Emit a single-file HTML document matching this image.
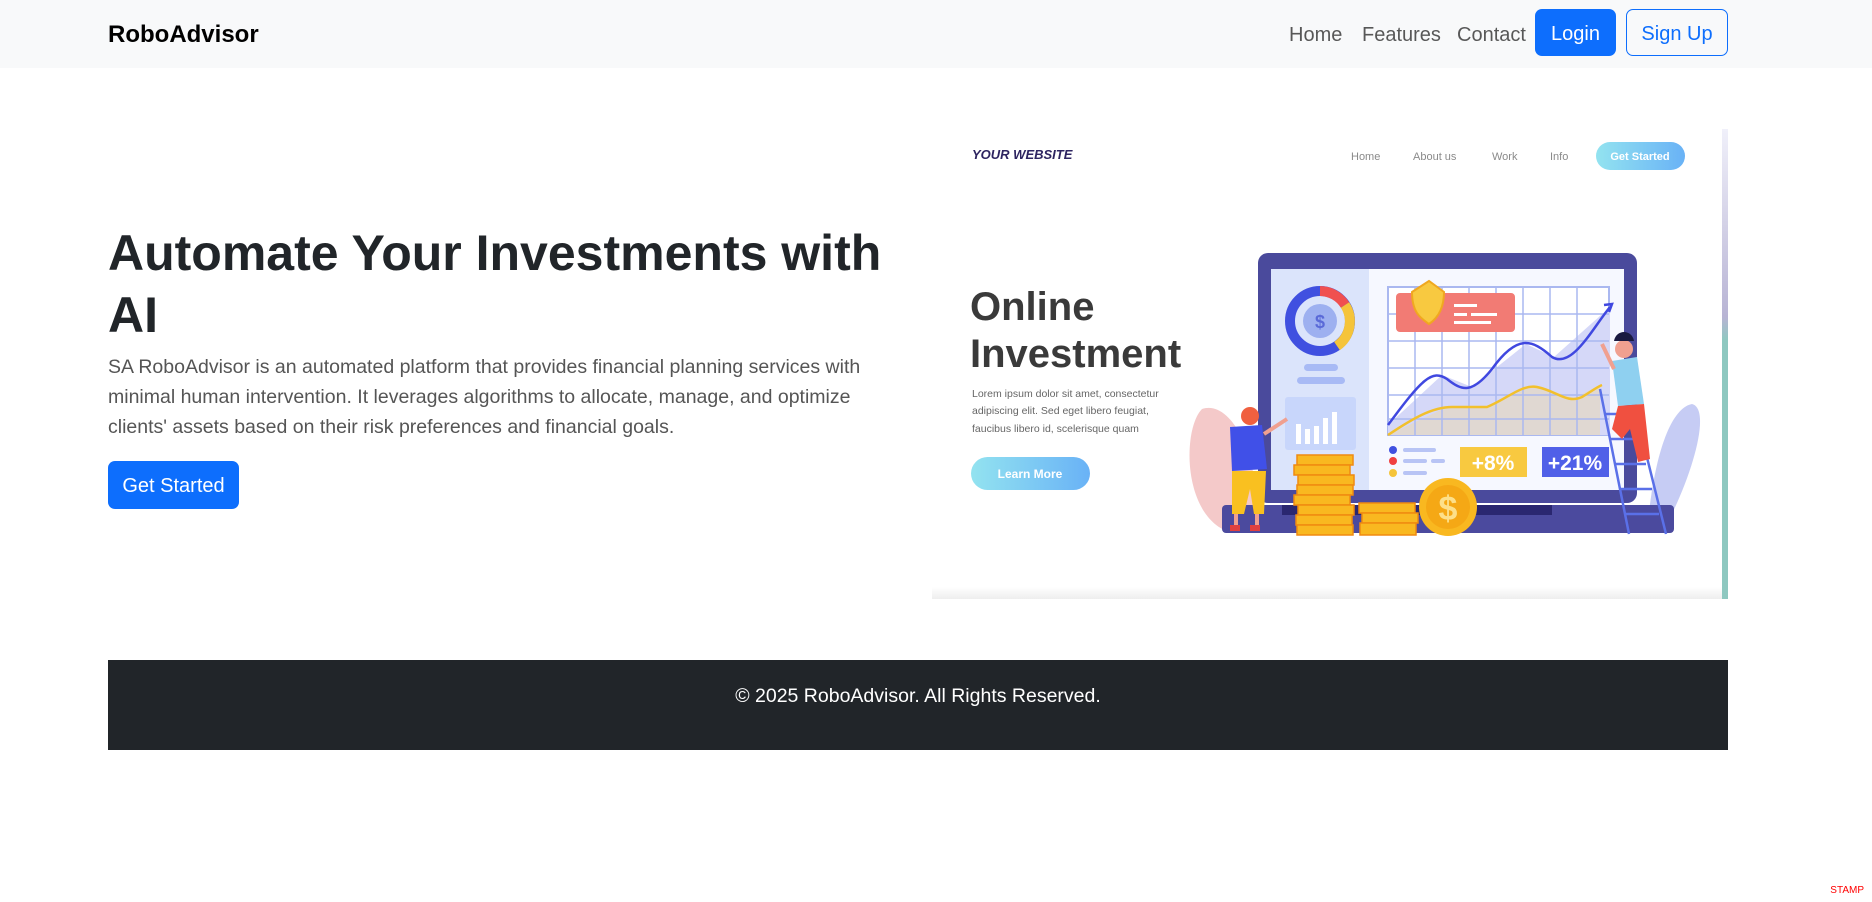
<!DOCTYPE html>
<html><head><meta charset="utf-8"><style>
*{box-sizing:border-box;margin:0;padding:0}
body{width:1872px;height:902px;background:#fff;font-family:"Liberation Sans",sans-serif;position:relative;overflow:hidden;color:#212529}
.nav{position:absolute;left:0;top:0;width:1872px;height:68px;background:#f8f9fa}
.brand{position:absolute;left:108px;top:19px;font-size:24px;font-weight:bold;color:#000;line-height:32px}
.nl{position:absolute;top:21px;font-size:20px;line-height:28px;color:rgba(0,0,0,.65)}
.btn{position:absolute;border-radius:7px;font-size:20px;line-height:28px;text-align:center;padding-top:11px}
h1{position:absolute;left:108px;top:222px;font-size:50px;line-height:62px;font-weight:bold;white-space:nowrap;color:#212529}
.lead{position:absolute;left:108px;top:352px;font-size:19.5px;line-height:30px;color:#555;white-space:nowrap}
.gs{left:108px;top:461px;width:131px;height:48px;background:#0d6efd;color:#fff}
.foot{position:absolute;left:108px;top:660px;width:1620px;height:90px;background:#212529;color:#fff;font-size:19.5px;text-align:center;line-height:72px}
.stamp{position:absolute;right:8px;bottom:6px;font-size:10px;color:red}
</style></head><body>
<div class="nav">
<div class="brand">RoboAdvisor</div>
<div class="nl" style="left:1289px">Home</div>
<div class="nl" style="left:1362px">Features</div>
<div class="nl" style="left:1457px">Contact</div>
<div class="btn" style="left:1535px;top:9px;width:81px;height:47px;background:#0d6efd;color:#fff">Login</div>
<div class="btn" style="left:1626px;top:9px;width:102px;height:47px;border:1px solid #0d6efd;color:#0d6efd;padding-top:10px">Sign Up</div>
</div>
<h1>Automate Your Investments with<br>AI</h1>
<div class="lead">SA RoboAdvisor is an automated platform that provides financial planning services with<br>minimal human intervention. It leverages algorithms to allocate, manage, and optimize<br>clients' assets based on their risk preferences and financial goals.</div>
<div class="btn gs">Get Started</div>

<svg style="position:absolute;left:932px;top:129px" width="796" height="470" viewBox="0 0 796 470" font-family="Liberation Sans, sans-serif">
<defs>
<linearGradient id="bg" x1="0" x2="1"><stop offset="0" stop-color="#93e3f0"/><stop offset="1" stop-color="#69b2f6"/></linearGradient>
<linearGradient id="st" x1="0" y1="0" x2="0" y2="1"><stop offset="0" stop-color="#f0f0fa"/><stop offset=".4" stop-color="#b8b4d4"/><stop offset=".45" stop-color="#8ec8c0"/><stop offset="1" stop-color="#8ec8c0"/></linearGradient>
<linearGradient id="sh" x1="0" y1="0" x2="0" y2="1"><stop offset="0" stop-color="#fff"/><stop offset="1" stop-color="#eeeeee"/></linearGradient>
</defs>
<rect width="796" height="470" fill="#fff"/>
<rect x="790" y="0" width="6" height="470" fill="url(#st)"/>
<rect x="0" y="458" width="790" height="12" fill="url(#sh)"/>
<text x="40" y="30" font-size="13" font-style="italic" font-weight="bold" fill="#2d2460">YOUR WEBSITE</text>
<g font-size="11" fill="#8a8a8a"><text x="419" y="31">Home</text><text x="481" y="31">About us</text><text x="560" y="31">Work</text><text x="618" y="31">Info</text></g>
<rect x="664" y="13" width="89" height="28" rx="14" fill="url(#bg)"/>
<text x="708" y="31" font-size="11" font-weight="bold" fill="#fff" text-anchor="middle">Get Started</text>
<text x="38" y="191" font-size="40" font-weight="bold" fill="#3a3a3a">Online</text>
<text x="38" y="238" font-size="40" font-weight="bold" fill="#3a3a3a">Investment</text>
<g font-size="10.5" fill="#666"><text x="40" y="268">Lorem ipsum dolor sit amet, consectetur</text><text x="40" y="285">adipiscing elit. Sed eget libero feugiat,</text><text x="40" y="303">faucibus libero id, scelerisque quam</text></g>
<rect x="39" y="328" width="119" height="33" rx="16.5" fill="url(#bg)"/>
<text x="98" y="349" font-size="12" font-weight="bold" fill="#fff" text-anchor="middle">Learn More</text>
<path d="M300 404 C250 390 250 300 270 280 C300 270 330 330 325 404Z" fill="#f4c9c9"/>
<path d="M730 404 C760 350 780 280 760 275 C735 280 720 340 715 404Z" fill="#c6ccf4"/>
<rect x="326" y="124" width="379" height="250" rx="10" fill="#4a4a9c"/>
<rect x="339" y="140" width="353" height="221" fill="#f6f8ff"/>
<rect x="339" y="140" width="98" height="221" fill="#dbe4fb"/>
<rect x="290" y="376" width="452" height="28" rx="4" fill="#4b4a9e"/>
<rect x="350" y="376" width="270" height="10" fill="#2a2770"/>
<circle cx="388" cy="192" r="30" fill="none" stroke="#4050e0" stroke-width="10"/>
<path d="M388 162 A30 30 0 0 1 413 176" fill="none" stroke="#f05050" stroke-width="10"/>
<path d="M413 176 A30 30 0 0 1 405 217" fill="none" stroke="#f5c43a" stroke-width="10"/>
<circle cx="388" cy="192" r="17" fill="#9db0f0"/>
<text x="388" y="199" font-size="18" font-weight="bold" fill="#5a6ad8" text-anchor="middle">$</text>
<rect x="372" y="235" width="34" height="7" rx="3.5" fill="#a8baf5"/>
<rect x="365" y="248" width="48" height="7" rx="3.5" fill="#a8baf5"/>
<rect x="353" y="268" width="71" height="53" rx="3" fill="#c8d6fb"/>
<g fill="#fff"><rect x="364" y="295" width="5" height="20"/><rect x="373" y="300" width="5" height="15"/><rect x="382" y="297" width="5" height="18"/><rect x="391" y="289" width="5" height="26"/><rect x="400" y="283" width="5" height="32"/></g>
<rect x="456" y="158" width="221" height="148" fill="#fff" stroke="#aab8f0" stroke-width="2"/>
<path d="M456 296 L510 246 L540 258 L594 215 L622 228 L678 178 L678 306 L456 306Z" fill="#d5d8f8"/>
<path d="M456 306 L515 278 L555 278 L602 256 L642 269 L668 256 L668 306Z" fill="#e0d8d2"/>
<g stroke="#aab8f0" stroke-width="1.5"><path d="M483 158V306M510 158V306M537 158V306M564 158V306M591 158V306M618 158V306M645 158V306M456 185H677M456 212H677M456 239H677M456 266H677M456 290H677"/></g>
<path d="M456 296 C490 250 500 240 515 250 C530 262 540 265 560 240 C585 205 600 210 620 228 C640 240 660 200 678 178" fill="none" stroke="#4048e0" stroke-width="2.5"/>
<path d="M672 176 L680 175 L677 183" fill="none" stroke="#4048e0" stroke-width="2.5"/>
<path d="M456 306 C480 290 500 278 520 278 L555 278 C575 270 590 255 605 258 C625 262 635 275 650 268 C660 262 665 258 670 256" fill="none" stroke="#f2c02c" stroke-width="2.5"/>
<rect x="464" y="164" width="119" height="39" rx="4" fill="#f27b74"/>
<path d="M480 163 L497 152 L512 163 C512 185 500 193 497 195 C490 190 480 185 480 163Z" fill="#f8c940" stroke="#f0a820" stroke-width="2"/>
<g fill="#fff"><rect x="522" y="175" width="23" height="3"/><rect x="522" y="184" width="13" height="3"/><rect x="539" y="184" width="26" height="3"/><rect x="522" y="192" width="37" height="3"/></g>
<circle cx="461" cy="321" r="4" fill="#4050e0"/><circle cx="461" cy="332" r="4" fill="#f04040"/><circle cx="461" cy="344" r="4" fill="#f5c43a"/>
<g fill="#b8c4f5"><rect x="471" y="319" width="33" height="4" rx="2"/><rect x="471" y="330" width="24" height="4" rx="2"/><rect x="499" y="330" width="14" height="4" rx="2"/><rect x="471" y="342" width="24" height="4" rx="2"/></g>
<rect x="528" y="318" width="67" height="30" fill="#f8c940"/>
<text x="561" y="341" font-size="21" font-weight="bold" fill="#fff" text-anchor="middle">+8%</text>
<rect x="610" y="318" width="67" height="30" fill="#5060e8"/>
<text x="643" y="341" font-size="21" font-weight="bold" fill="#fff" text-anchor="middle">+21%</text>
<g fill="#f9b820" stroke="#f08a10" stroke-width="1.5">
<rect x="365" y="326" width="56" height="10"/><rect x="362" y="336" width="56" height="10"/><rect x="366" y="346" width="56" height="10"/><rect x="365" y="356" width="56" height="10"/><rect x="362" y="366" width="56" height="10"/><rect x="366" y="376" width="56" height="10"/><rect x="364" y="386" width="56" height="10"/><rect x="365" y="396" width="56" height="10"/>
<rect x="427" y="374" width="56" height="10"/><rect x="430" y="384" width="56" height="10"/><rect x="428" y="394" width="56" height="12"/>
</g>
<circle cx="516" cy="378" r="29" fill="#f9b820"/><circle cx="516" cy="378" r="22" fill="#f5a815"/>
<text x="516" y="391" font-size="34" font-weight="bold" fill="#fde08a" text-anchor="middle">$</text>
<circle cx="318" cy="287" r="9" fill="#f06040"/>
<path d="M298 298 L330 296 L335 340 L300 342Z" fill="#4050e8"/>
<path d="M332 305 L355 290" stroke="#f0a090" stroke-width="4"/>
<path d="M300 342 L334 342 L332 385 L322 385 L318 360 L312 385 L300 385Z" fill="#f9c020"/>
<rect x="298" y="396" width="10" height="6" fill="#e04040"/><rect x="318" y="396" width="10" height="6" fill="#e04040"/>
<path d="M304 385 L304 396 M325 385 L325 396" stroke="#f0a090" stroke-width="4"/>
<g stroke="#5a70e8" stroke-width="2.5"><path d="M668 260 L697 405 M698 260 L734 405 M673 285H702M678 310H708M683 335H714M688 360H720M693 385H727"/></g>
<circle cx="692" cy="220" r="9" fill="#f0a090"/><path d="M682 212 C684 200 700 200 702 212Z" fill="#1a1a40"/>
<path d="M680 232 L705 228 L712 275 L686 277Z" fill="#8fd0f0"/>
<path d="M682 240 L670 215" stroke="#f0a090" stroke-width="4"/>
<path d="M686 277 L712 275 L718 330 L706 333 L698 300 L690 310 L680 300Z" fill="#f05040"/>
</svg>

<div class="foot">© 2025 RoboAdvisor. All Rights Reserved.</div>
<div class="stamp">STAMP</div>
</body></html>
